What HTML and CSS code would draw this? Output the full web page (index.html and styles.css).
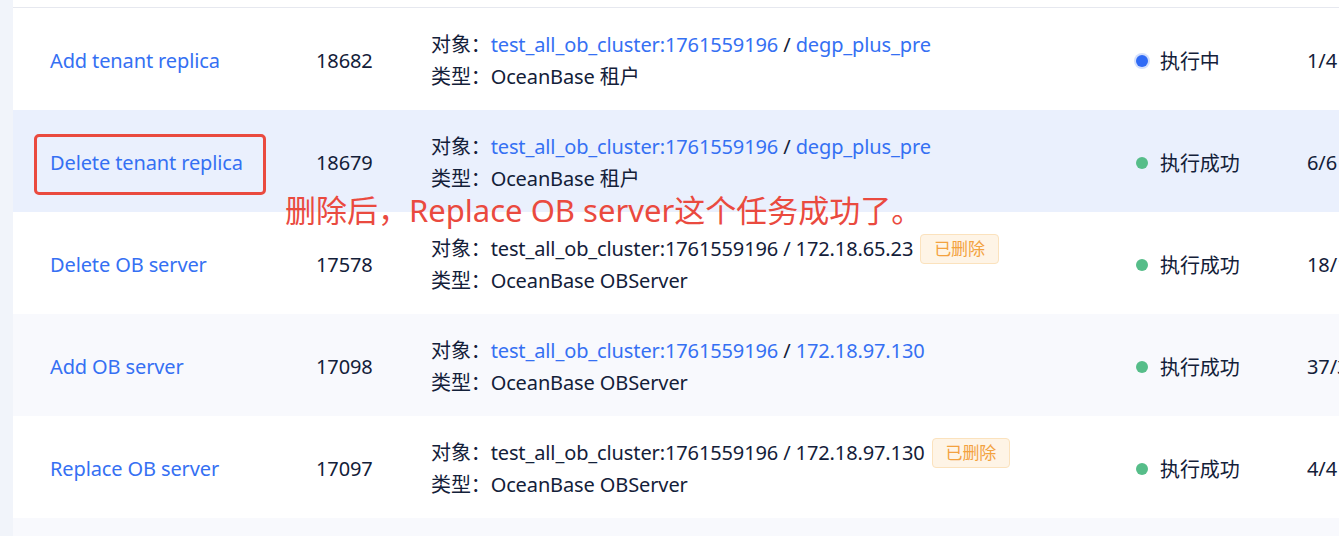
FILE: index.html
```html
<!DOCTYPE html>
<html lang="zh-CN">
<head>
<meta charset="UTF-8" />
<meta name="viewport" content="width=device-width, initial-scale=1" />
<title>任务列表</title>
<link rel="stylesheet" href="styles.css">
</head>
<body>
  <div class="page">
    <div class="side"></div>
    <div class="table">
      <div class="row">
        <a href="#" class="name">Add tenant replica</a>
        <div class="id">18682</div>
        <div class="target">
          <div>对象：<a href="#">test_all_ob_cluster:1761559196</a> / <a href="#">degp_plus_pre</a></div>
          <div>类型：OceanBase 租户</div>
        </div>
        <div class="status"><span class="dot running"></span>执行中</div>
        <div class="progress">1/4</div>
      </div>

      <div class="row active">
        <a href="#" class="name">Delete tenant replica</a>
        <div class="id">18679</div>
        <div class="target">
          <div>对象：<a href="#">test_all_ob_cluster:1761559196</a> / <a href="#">degp_plus_pre</a></div>
          <div>类型：OceanBase 租户</div>
        </div>
        <div class="status"><span class="dot"></span>执行成功</div>
        <div class="progress">6/6</div>
      </div>

      <div class="row">
        <a href="#" class="name">Delete OB server</a>
        <div class="id">17578</div>
        <div class="target">
          <div>对象：test_all_ob_cluster:1761559196 / 172.18.65.23<span class="tag">已删除</span></div>
          <div>类型：OceanBase OBServer</div>
        </div>
        <div class="status"><span class="dot"></span>执行成功</div>
        <div class="progress">18/18</div>
      </div>

      <div class="row striped">
        <a href="#" class="name">Add OB server</a>
        <div class="id">17098</div>
        <div class="target">
          <div>对象：<a href="#">test_all_ob_cluster:1761559196</a> / <a href="#">172.18.97.130</a></div>
          <div>类型：OceanBase OBServer</div>
        </div>
        <div class="status"><span class="dot"></span>执行成功</div>
        <div class="progress">37/37</div>
      </div>

      <div class="row">
        <a href="#" class="name">Replace OB server</a>
        <div class="id">17097</div>
        <div class="target">
          <div>对象：test_all_ob_cluster:1761559196 / 172.18.97.130<span class="tag">已删除</span></div>
          <div>类型：OceanBase OBServer</div>
        </div>
        <div class="status"><span class="dot"></span>执行成功</div>
        <div class="progress">4/4</div>
      </div>

      <div class="row striped"></div>
    </div>

    <!-- 截图上的标注 -->
    <div class="mark-box"></div>
    <div class="mark-text">删除后，Replace OB server这个任务成功了。</div>
  </div>
</body>
</html>
```

FILE: styles.css
```css
body {
  margin: 0;
  background-color: #fff;
  color: #132039;
  font-family: "Noto Sans", "Noto Sans CJK SC", sans-serif;
  font-size: 20px;
  letter-spacing: -0.12px;
  overflow: hidden;
}
a {
  color: #3570f3;
  text-decoration: none;
}
.page {
  position: relative;
  display: flex;
  height: 536px;
  overflow: hidden;
}
.side {
  width: 13px;
  flex-shrink: 0;
  background-color: #f1f4fa;
}
.table {
  flex: 1;
  min-width: 0;
  margin-top: 7px;
  border-top: 1px solid #e6e8ef;
  background-color: #fff;
}
.row {
  display: grid;
  grid-template-columns: 266px 115px 705px 171px 1fr;
  align-items: center;
  height: 102px;
  padding: 3px 0 0 37px;
  box-sizing: border-box;
  white-space: nowrap;
}
.row.active {
  background-color: #eaf0fd;
}
.row.striped {
  background-color: #f8f9fd;
}
.progress {
  overflow: hidden;
}
.target {
  line-height: 32px;
}
.tag {
  display: inline-block;
  margin-left: 7px;
  padding: 0 13px;
  height: 30px;
  line-height: 28px;
  font-size: 17px;
  color: #f3a23f;
  background-color: #fef4e6;
  border: 1px solid #fbe2bd;
  border-radius: 4px;
  box-sizing: border-box;
  vertical-align: 1px;
}
.status {
  display: flex;
  align-items: center;
}
.dot {
  width: 12px;
  height: 12px;
  border-radius: 50%;
  background-color: #56bd89;
  margin-right: 12px;
}
.dot.running {
  background-color: #2f6af5;
  box-shadow: 0 0 0 2px #d3dffc;
}
.mark-box {
  position: absolute;
  left: 34px;
  top: 134px;
  width: 232px;
  height: 61px;
  border: 3px solid #ea4a3f;
  border-radius: 5px;
  box-sizing: border-box;
}
.mark-text {
  position: absolute;
  left: 285px;
  top: 188px;
  font-size: 31px;
  line-height: 44px;
  letter-spacing: 0;
  color: #ea4a3f;
  white-space: nowrap;
}
```
